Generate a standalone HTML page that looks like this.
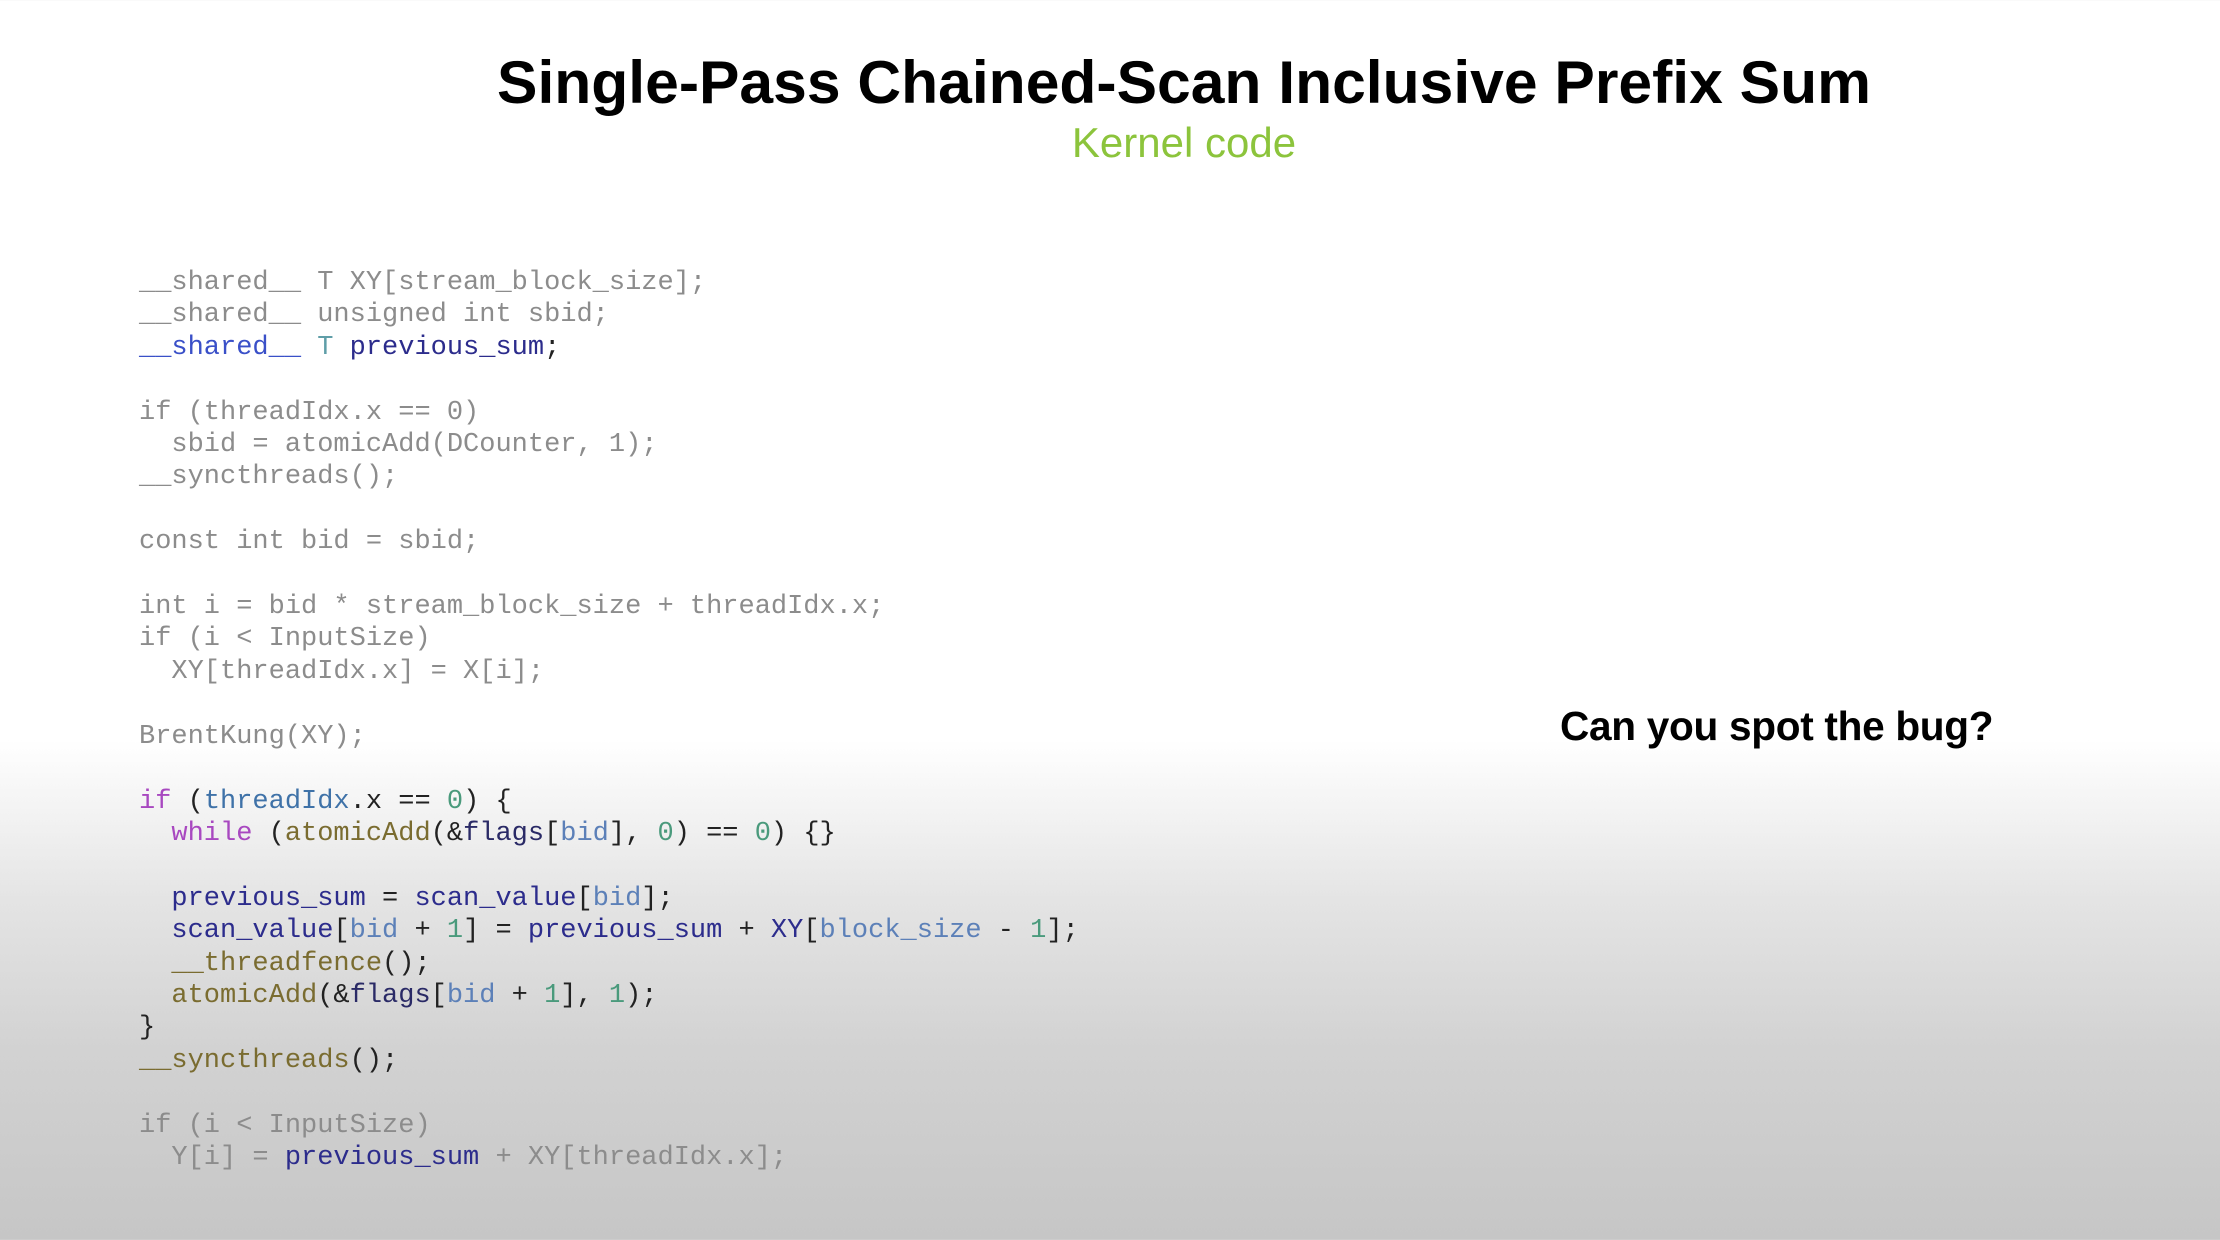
<!DOCTYPE html>
<html><head><meta charset="utf-8"><style>
html,body{margin:0;padding:0}
body{width:2220px;height:1240px;overflow:hidden;position:relative;
background:linear-gradient(to bottom,#fff 0px,#fff 740px,#e4e4e4 900px,#d2d2d2 1050px,#c6c6c6 1240px);
font-family:"Liberation Sans",sans-serif}
.t{position:absolute;left:0;width:2368px;top:47px;text-align:center;font-weight:bold;font-size:60.6px;color:#000}
.k{position:absolute;left:0;width:2368px;top:119px;text-align:center;font-size:42px;color:#8cc43c}
.b{position:absolute;left:1560px;top:703px;font-weight:bold;font-size:40.6px;color:#000;letter-spacing:-0.3px}
pre{position:absolute;left:139px;top:267px;margin:0;font-family:"Liberation Mono",monospace;font-size:27px;line-height:32.4px;color:#8c8c8c}
.g{color:#8c8c8c}.db{color:#2c2c8c}.sh{color:#3a50c8}.tl{color:#5f9ea8}.kw{color:#a848c0}
.ti{color:#3f72a8}.n{color:#4a9a7c}.fn{color:#7a6c30}.bd{color:#5c80b8}.fl{color:#2a2a66}.k2{color:#222}
</style></head><body>
<div class="t">Single-Pass Chained-Scan Inclusive Prefix Sum</div>
<div class="k">Kernel code</div>
<div class="b">Can you spot the bug?</div>
<pre>__shared__ T XY[stream_block_size];
__shared__ unsigned int sbid;
<span class="sh">__shared__</span> <span class="tl">T</span> <span class="db">previous_sum</span><span class="k2">;</span>

if (threadIdx.x == 0)
  sbid = atomicAdd(DCounter, 1);
__syncthreads();

const int bid = sbid;

int i = bid * stream_block_size + threadIdx.x;
if (i &lt; InputSize)
  XY[threadIdx.x] = X[i];

BrentKung(XY);

<span class="kw">if</span> <span class="k2">(</span><span class="ti">threadIdx</span><span class="k2">.x == </span><span class="n">0</span><span class="k2">) {</span>
  <span class="kw">while</span> <span class="k2">(</span><span class="fn">atomicAdd</span><span class="k2">(&amp;</span><span class="fl">flags</span><span class="k2">[</span><span class="bd">bid</span><span class="k2">], </span><span class="n">0</span><span class="k2">) == </span><span class="n">0</span><span class="k2">) {}</span>

  <span class="db">previous_sum</span><span class="k2"> = </span><span class="db">scan_value</span><span class="k2">[</span><span class="bd">bid</span><span class="k2">];</span>
  <span class="db">scan_value</span><span class="k2">[</span><span class="bd">bid</span><span class="k2"> + </span><span class="n">1</span><span class="k2">] = </span><span class="db">previous_sum</span><span class="k2"> + </span><span class="db">XY</span><span class="k2">[</span><span class="bd">block_size</span><span class="k2"> - </span><span class="n">1</span><span class="k2">];</span>
  <span class="fn">__threadfence</span><span class="k2">();</span>
  <span class="fn">atomicAdd</span><span class="k2">(&amp;</span><span class="fl">flags</span><span class="k2">[</span><span class="bd">bid</span><span class="k2"> + </span><span class="n">1</span><span class="k2">], </span><span class="n">1</span><span class="k2">);</span>
<span class="k2">}</span>
<span class="fn">__syncthreads</span><span class="k2">();</span>

if (i &lt; InputSize)
  Y[i] = <span class="db">previous_sum</span> + XY[threadIdx.x];</pre>
</body></html>
